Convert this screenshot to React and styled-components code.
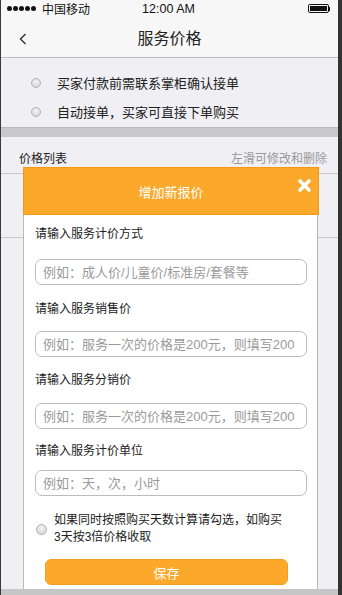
import React from 'react'
import styled, { createGlobalStyle } from 'styled-components';

const GlobalStyle = createGlobalStyle`
    html, body {
        margin: 0;
        padding: 0;
        background: #efeff4;
    }
    body {
        font-family: "Liberation Sans", "Noto Sans CJK SC", sans-serif;
        color: #222;
    }
    * {
        box-sizing: border-box;
    }
`;

const Frame = styled.div`
    position: relative;
    width: 342px;
    height: 595px;
    display: flex;
    flex-direction: column;
    background: #efeff4;
    border-left: 1px solid #3a3a3a;
    border-right: 4px solid #333;
    overflow: hidden;
`;

const StatusBar = styled.div`
    height: 17px;
    display: grid;
    grid-template-columns: 1fr auto 1fr;
    align-items: center;
    padding: 0 8px 0 6px;
    background: #f7f7f7;
    font-size: 12px;
    color: #111;
`;

const Carrier = styled.div`
    display: flex;
    align-items: center;
    gap: 6px;
`;

const Signal = styled.div`
    display: flex;
    gap: 1px;
`;

const Dot = styled.span`
    width: 5px;
    height: 5px;
    border-radius: 50%;
    background: #111;
`;

const Clock = styled.div`
    font-size: 12.5px;
`;

const Battery = styled.div`
    justify-self: end;
    display: flex;
    align-items: center;
`;

const BatteryBody = styled.div`
    width: 21px;
    height: 9px;
    border: 1px solid #111;
    border-radius: 2px;
    padding: 1px;
    &:after {
        content: '';
        display: block;
        width: 100%;
        height: 100%;
        background: #111;
    }
`;

const BatteryNub = styled.div`
    width: 1.5px;
    height: 4px;
    background: #111;
`;

const NavBar = styled.div`
    position: relative;
    height: 41px;
    display: flex;
    align-items: center;
    justify-content: center;
    background: #f7f7f7;
    border-bottom: 1px solid #bdbdc0;
`;

const BackButton = styled.div`
    position: absolute;
    left: 18px;
    top: 16px;
    display: flex;
`;

const NavTitle = styled.h1`
    margin: 0;
    font-size: 16px;
    font-weight: normal;
    color: #222;
`;

const OptionList = styled.div`
    padding: 10px 0 0 30px;
    height: 69px;
    background: #efeff4;
`;

const OptionRow = styled.label`
    display: flex;
    align-items: center;
    height: 29px;
    gap: 16px;
    font-size: 13px;
    color: #222;
`;

const Radio = styled.span`
    flex: none;
    width: ${props => props.$size || 10}px;
    height: ${props => props.$size || 10}px;
    border-radius: 50%;
    border: 1px solid #b0b0b0;
    background: radial-gradient(circle at 50% 35%, #f2f2f2, #d2d2d2);
`;

const Divider = styled.div`
    height: 10px;
    background: #c9c9cd;
    border-top: 1px solid #b9b9bd;
`;

const ListHeader = styled.div`
    display: flex;
    justify-content: space-between;
    align-items: flex-end;
    height: 37px;
    padding: 0 11px 7px 18px;
    border-bottom: 1px solid #c8c8cc;
    font-size: 12px;
`;

const Hint = styled.span`
    color: #999;
`;

const ListRow = styled.div`
    height: 64px;
    border-bottom: 1px solid #c8c8cc;
`;

const Spacer = styled.div`
    flex: 1;
`;

const BottomBar = styled.div`
    height: 6px;
    background: #c6c6c6;
`;

const Modal = styled.div`
    position: absolute;
    left: 22px;
    top: 167px;
    bottom: 6px;
    width: 296px;
    display: flex;
    flex-direction: column;
`;

const ModalHeader = styled.div`
    position: relative;
    height: 48px;
    display: flex;
    align-items: center;
    justify-content: center;
    background: #fba82b;
    border: 1px solid #f29a14;
    color: #fff;
    font-size: 13px;
`;

const CloseButton = styled.div`
    position: absolute;
    right: 6px;
    top: 10px;
    display: flex;
`;

const ModalBody = styled.div`
    flex: 1;
    background: #fff;
    border-left: 1px solid #b8b8b8;
    border-right: 1px solid #b8b8b8;
    margin-right: 1px;
    padding: 0 11px 0 11px;
    display: flex;
    flex-direction: column;
`;

const FieldLabel = styled.div`
    height: 20px;
    line-height: 20px;
    margin-top: ${props => props.$top}px;
    font-size: 12px;
    color: #222;
`;

const Input = styled.input`
    height: 26px;
    width: 272px;
    margin-top: ${props => props.$gap}px;
    padding: 0 7px;
    border: 1px solid #bcbcbc;
    border-radius: 7px;
    font-family: inherit;
    font-size: 13px;
    outline: none;
    &::placeholder {
        color: #9a9a9a;
    }
`;

const CheckRow = styled.label`
    display: flex;
    align-items: center;
    gap: 7px;
    margin-top: 16px;
    padding-left: 1px;
`;

const CheckText = styled.span`
    width: 230px;
    font-size: 12px;
    line-height: 17px;
    color: #222;
`;

const SaveButton = styled.button`
    align-self: flex-start;
    margin: 13px 0 0 10px;
    width: 243px;
    height: 26px;
    border: 1px solid #f0a01c;
    border-radius: 6px;
    background: #fba82b;
    color: #fff;
    font-family: inherit;
    font-size: 13px;
`;

const fields = [
    { label: '请输入服务计价方式', placeholder: '例如：成人价/儿童价/标准房/套餐等', top: 9, gap: 15 },
    { label: '请输入服务销售价', placeholder: '例如：服务一次的价格是200元，则填写200', top: 14, gap: 12 },
    { label: '请输入服务分销价', placeholder: '例如：服务一次的价格是200元，则填写200', top: 13, gap: 13 },
    { label: '请输入服务计价单位', placeholder: '例如：天，次，小时', top: 12, gap: 9 },
];

function App() {
    return (
        <Frame>
            <GlobalStyle />
            <StatusBar>
                <Carrier>
                    <Signal>
                        {[0, 1, 2, 3, 4].map(i => <Dot key={i} />)}
                    </Signal>
                    中国移动
                </Carrier>
                <Clock>12:00 AM</Clock>
                <Battery>
                    <BatteryBody />
                    <BatteryNub />
                </Battery>
            </StatusBar>
            <NavBar>
                <BackButton>
                    <svg width="8" height="12" viewBox="0 0 8 12">
                        <path d="M6.5 1 L1.5 6 L6.5 11" fill="none" stroke="#333" strokeWidth="1.4" />
                    </svg>
                </BackButton>
                <NavTitle>服务价格</NavTitle>
            </NavBar>
            <OptionList>
                <OptionRow><Radio $size={10} />买家付款前需联系掌柜确认接单</OptionRow>
                <OptionRow><Radio $size={10} />自动接单，买家可直接下单购买</OptionRow>
            </OptionList>
            <Divider />
            <ListHeader>
                <span>价格列表</span>
                <Hint>左滑可修改和删除</Hint>
            </ListHeader>
            <ListRow />
            <Spacer />
            <BottomBar />

            <Modal>
                <ModalHeader>
                    增加新报价
                    <CloseButton>
                        <svg width="15" height="15" viewBox="0 0 15 15">
                            <path d="M3 3 L12 12 M12 3 L3 12" stroke="#fff" strokeWidth="3.6" strokeLinecap="round" />
                        </svg>
                    </CloseButton>
                </ModalHeader>
                <ModalBody>
                    {fields.map(f => (
                        <React.Fragment key={f.label + f.top}>
                            <FieldLabel $top={f.top}>{f.label}</FieldLabel>
                            <Input $gap={f.gap} placeholder={f.placeholder} />
                        </React.Fragment>
                    ))}
                    <CheckRow>
                        <Radio $size={11} />
                        <CheckText>如果同时按照购买天数计算请勾选，如购买3天按3倍价格收取</CheckText>
                    </CheckRow>
                    <SaveButton>保存</SaveButton>
                </ModalBody>
            </Modal>
        </Frame>
    )
}

export default App;
